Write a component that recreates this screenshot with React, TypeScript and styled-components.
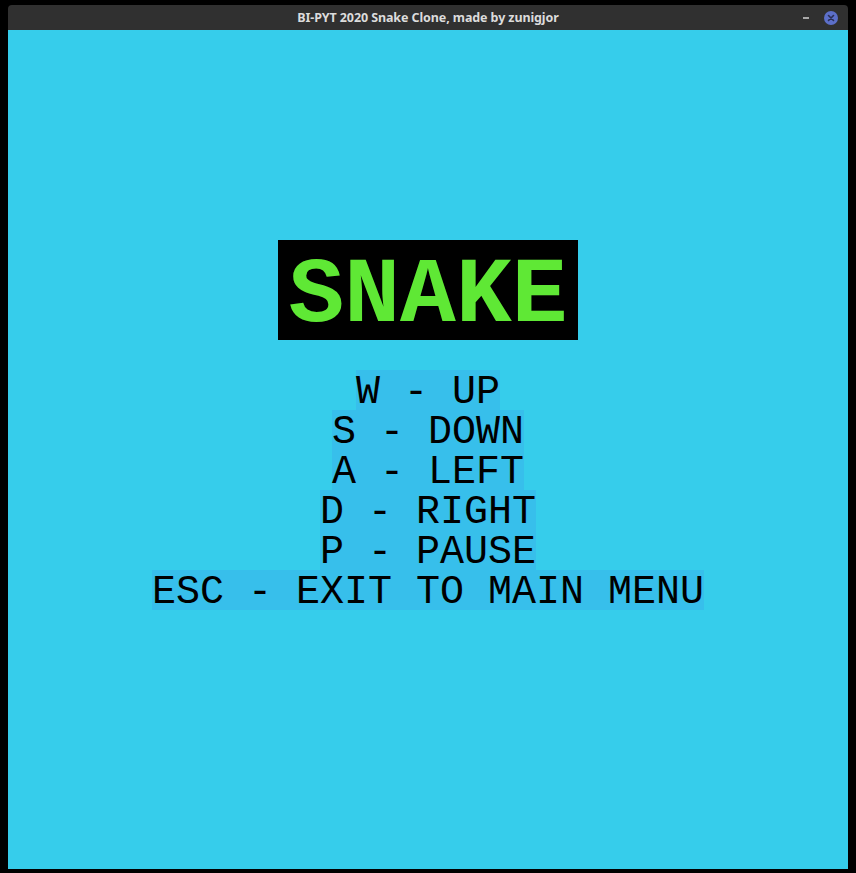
import React from "react";
import styled, { createGlobalStyle } from "styled-components";

const Global = createGlobalStyle`
  html, body { margin: 0; padding: 0; background: #000; }
  #root { width: 856px; height: 873px; }
`;

const Frame = styled.div`
  width: 856px;
  height: 873px;
  box-sizing: border-box;
  padding: 5px 8px 4px 8px;
  background: #000;
  display: flex;
  flex-direction: column;
`;

const TitleBar = styled.div`
  position: relative;
  height: 25px;
  flex: none;
  background: #303030;
  border-radius: 4px 4px 0 0;
  display: flex;
  align-items: center;
  justify-content: center;
`;

const Title = styled.div`
  font-family: "Noto Sans", "DejaVu Sans", sans-serif;
  font-weight: 700;
  font-size: 12.5px;
  color: #dcdcdc;
  letter-spacing: -0.1px;
`;

const Controls = styled.div`
  position: absolute;
  right: 10px;
  top: 0;
  height: 25px;
  display: flex;
  align-items: center;
  gap: 15px;
`;

const Minimize = styled.div`
  width: 6px;
  height: 2px;
  background: #a8a8a8;
`;

const CloseBtn = styled.div`
  width: 14px;
  height: 14px;
  border-radius: 50%;
  background: #5c6fc9;
  display: flex;
  align-items: center;
  justify-content: center;
`;

const Content = styled.div`
  flex: 1;
  background: #36cdeb;
  display: flex;
  flex-direction: column;
  align-items: center;
  padding-top: 210px;
`;

const Logo = styled.div`
  width: 300px;
  height: 100px;
  box-sizing: border-box;
  padding-top: 14px;
  background: #000;
  display: flex;
  align-items: center;
  justify-content: center;
  font-family: "Liberation Mono", "Courier New", monospace;
  font-weight: 700;
  font-size: 93px;
  color: #5fe835;
  line-height: 86px;
  margin-bottom: 30px;
`;

const Keys = styled.div`
  display: flex;
  flex-direction: column;
  align-items: center;
`;

const KeyLine = styled.div`
  height: 40px;
  box-sizing: border-box;
  padding-top: 6px;
  line-height: 34px;
  background: #37bfeb;
  font-family: "Liberation Mono", "Courier New", monospace;
  font-size: 40px;
  color: #000;
  white-space: pre;
`;

const lines = [
  "W - UP",
  "S - DOWN",
  "A - LEFT",
  "D - RIGHT",
  "P - PAUSE",
  "ESC - EXIT TO MAIN MENU",
];

export default function App() {
  return (
    <>
      <Global />
      <Frame>
        <TitleBar>
          <Title>BI-PYT 2020 Snake Clone, made by zunigjor</Title>
          <Controls>
            <Minimize />
            <CloseBtn>
              <svg width="8" height="8" viewBox="0 0 8 8">
                <path d="M1.5 1.5 L6.5 6.5 M6.5 1.5 L1.5 6.5" stroke="#2a2f55" strokeWidth="1.6" strokeLinecap="round" />
              </svg>
            </CloseBtn>
          </Controls>
        </TitleBar>
        <Content>
          <Logo>SNAKE</Logo>
          <Keys>
            {lines.map((l) => (
              <KeyLine key={l}>{l}</KeyLine>
            ))}
          </Keys>
        </Content>
      </Frame>
    </>
  );
}
